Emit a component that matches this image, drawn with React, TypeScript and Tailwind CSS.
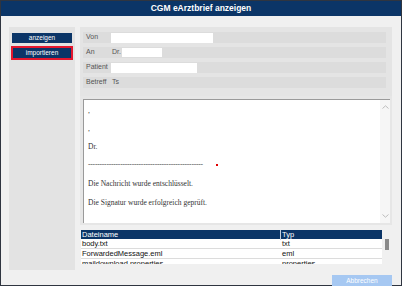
const rows = [
  { name: 'body.txt', typ: 'txt' },
  { name: 'ForwardedMessage.eml', typ: 'eml' },
  { name: 'maildownload.properties', typ: 'properties' },
];

const App = () => {
  return (
    <div className="w-[403px] h-[287px] bg-white" style={{ fontFamily: '"Liberation Sans", Arial, sans-serif' }}>
      <div className="w-[402px] h-[286px] border border-[#2f3540] flex flex-col bg-[#f0f0f0]">
        {/* Title */}
        <div className="h-[15px] shrink-0 bg-[#0b3567] flex items-center justify-center text-white font-bold text-[8.5px]">
          CGM eArztbrief anzeigen
        </div>

        <div className="flex flex-1 pl-[8px] pt-[11px] gap-[5px]">
          {/* Left side */}
          <div className="w-[66px] h-[243px] bg-[#e3e3e3] flex flex-col items-center pt-[6px] gap-[3px]">
            <div className="w-[60px] h-[10px] bg-[#0b3567] text-white text-[6.5px] flex items-center justify-center">anzeigen</div>
            <div className="w-[62px] h-[14px] border-2 border-[#e3172e] bg-[#0b3567] text-white text-[6.5px] flex items-center justify-center">importieren</div>
          </div>

          {/* Right side */}
          <div className="w-[312px] flex flex-col">
            <div className="bg-[#e6e6e6] h-[198px] flex flex-col">
              <div className="flex flex-col gap-[4px] pt-[5px] pl-[3px] pr-[6px] h-[69px] bg-[#e4e4e4]">
                <div className="h-[11px] bg-[#dcdcdc] flex items-center text-[7px] text-[#555]">
                  <span className="w-[28px] pl-[3px]">Von</span>
                  <div className="w-[102px] h-[10px] bg-white" />
                </div>
                <div className="h-[11px] bg-[#dcdcdc] flex items-center text-[7px] text-[#555]">
                  <span className="w-[29px] pl-[3px]">An</span>
                  <span className="w-[10px]">Dr.</span>
                  <div className="w-[40px] h-[9px] bg-white" />
                </div>
                <div className="h-[11px] bg-[#dcdcdc] flex items-center text-[7px] text-[#555]">
                  <span className="w-[28px] pl-[3px]">Patient</span>
                  <div className="w-[86px] h-[10px] bg-white" />
                </div>
                <div className="h-[11px] bg-[#dcdcdc] flex items-center text-[7px] text-[#555]">
                  <span className="w-[29px] pl-[3px]">Betreff</span>
                  <span>Ts</span>
                </div>
              </div>

              <div className="ml-[3px] mr-[2px] mt-[3px] h-[124px] bg-white border-t border-l border-[#9a9a9a] flex">
                <div
                  className="flex-1 pl-[4px] pt-[6px] text-[7.5px] text-[#333333] flex flex-col gap-[9px] leading-[9px]"
                  style={{ fontFamily: '"Liberation Serif", "Times New Roman", serif' }}
                >
                  <div>,</div>
                  <div>,</div>
                  <div>Dr.</div>
                  <div className="flex items-center">
                    <span className="text-[#555] tracking-[-0.2px]">--------------------------------------------------</span>
                    <span className="ml-[13px] w-[2px] h-[2px] bg-[#e00000]" />
                  </div>
                  <div className="mt-[1px]">Die Nachricht wurde entschlüsselt.</div>
                  <div className="mt-[1px]">Die Signatur wurde erfolgreich geprüft.</div>
                </div>
                <div className="w-[10px] bg-[#f6f6f6] flex flex-col justify-between items-center py-[5px]">
                  <svg width="7" height="4" viewBox="0 0 7 4"><path d="M0.5 3.5 L3.5 0.8 L6.5 3.5" fill="none" stroke="#bdbdbd" strokeWidth="1" /></svg>
                  <svg width="7" height="4" viewBox="0 0 7 4"><path d="M0.5 0.5 L3.5 3.2 L6.5 0.5" fill="none" stroke="#bdbdbd" strokeWidth="1" /></svg>
                </div>
              </div>
            </div>

            {/* Table */}
            <div className="flex mt-[5px] ml-[1px]">
              <div className="w-[301px] h-[34px] overflow-hidden bg-white text-[7.5px] text-[#111]">
                <div className="h-[9px] bg-[#0b3567] text-white flex items-center">
                  <span className="w-[200px] pl-[1px] border-r border-[#c8d0dc]">Dateiname</span>
                  <span className="pl-[1px]">Typ</span>
                </div>
                {rows.map((r) => (
                  <div key={r.name} className="h-[10px] flex items-center border-b border-[#dcdcdc]">
                    <span className="w-[200px] pl-[1px]">{r.name}</span>
                    <span className="pl-[1px]">{r.typ}</span>
                  </div>
                ))}
              </div>
              <div className="ml-[3px] mt-[9px] w-[4px] h-[11px] bg-[#8a8a8a]" />
            </div>

            <div className="flex justify-end mt-[11px]">
              <div className="w-[60px] h-[11px] bg-[#a6c8f2] text-white text-[6.5px] flex items-center justify-center">Abbrechen</div>
            </div>
          </div>
        </div>
      </div>
    </div>
  );
};

export default App;
